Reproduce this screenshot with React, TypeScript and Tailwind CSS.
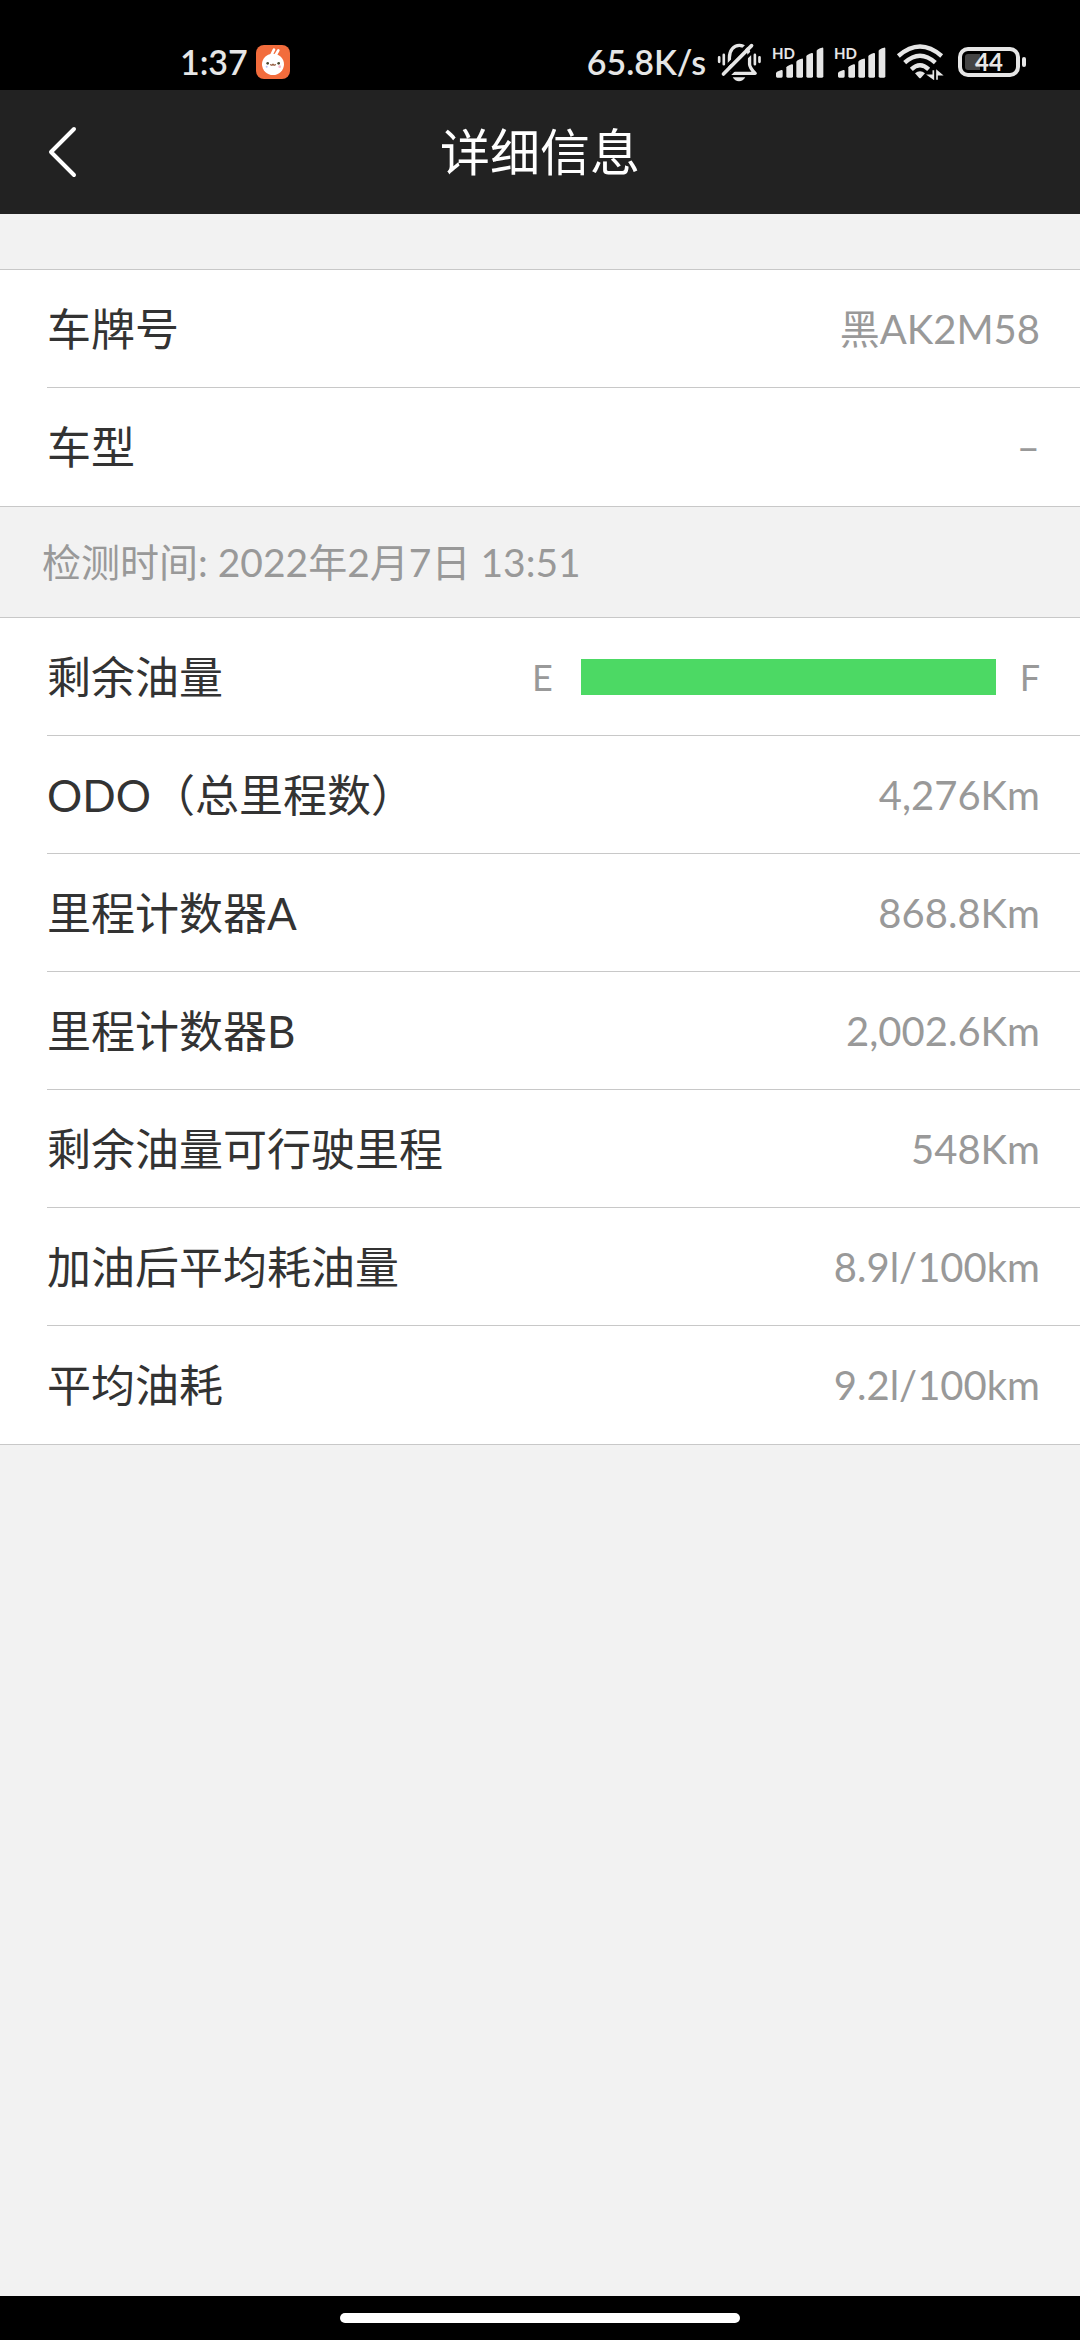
import type { ReactNode } from "react";

type Row = { label: string; value: ReactNode };

function SignalIcon() {
  return (
    <span className="relative block h-[34px] w-[52px]">
      <svg viewBox="608 45 156 102" className="h-full w-full" fill="#e6e6e6" aria-hidden="true">
        <path d="M620 129q1-4 10-7l6-2q4-1 4 3v16q0 4-4 4h-12q-4 0-4-4z" />
        <path d="M651 112q1-3 10-7l6-2q4-1 4 3v33q0 4-4 4h-12q-4 0-4-4z" />
        <path d="M681 95q1-3 10-7l6-2q4-1 4 3v50q0 4-4 4h-12q-4 0-4-4z" />
        <path d="M711 78q1-3 10-7l6-2q4-1 4 3v67q0 4-4 4h-12q-4 0-4-4z" />
        <path d="M742 62q1-3 10-7l6-2q4-1 4 3v83q0 4-4 4h-12q-4 0-4-4z" />
      </svg>
      <span className="absolute top-0 left-0 text-[15px] leading-[16px] font-bold">HD</span>
    </span>
  );
}

function MutedBellIcon() {
  return (
    <svg viewBox="440 37 138 121" className="h-[40px] w-[46px]" fill="none" stroke="#e6e6e6" aria-hidden="true">
      <path d="M480 112V84c0-22 13-37 30-37s31 15 31 37v20c0 8 4 14 17 28H482" strokeWidth="10" strokeLinejoin="round" />
      <path d="M456 126L538 42M474 142L560 56" stroke="#000" strokeWidth="9" />
      <path d="M462 134L547 48" strokeWidth="11" strokeLinecap="round" />
      <path d="M449 83v14M463 76v28M557 76v28M571 83v14" strokeWidth="8" strokeLinecap="round" />
      <path d="M490 144h38q-7 12-19 12t-19-12z" fill="#e6e6e6" stroke="none" />
    </svg>
  );
}

function WifiIcon() {
  return (
    <svg viewBox="228 44 144 108" className="mr-1 h-[36px] w-[48px]" fill="none" stroke="#e6e6e6" aria-hidden="true">
      <path d="M235 80q65-57 130 0M254 100q46-42 92 0M274 120q26-25 52 0" strokeWidth="13" />
      <path d="M285 132q15-12 30 0l-12 13q-3 3-6 0z" fill="#e6e6e6" stroke="none" />
      <path d="M340 123v25l-14-10h14M351 151v-26l13 11h-13" strokeWidth="5" fill="#e6e6e6" />
    </svg>
  );
}

function BatteryIcon() {
  return (
    <span className="relative flex h-[30px] w-[68px] items-center justify-center pr-[6px]">
      <svg viewBox="0 0 68 30" className="absolute inset-0 h-full w-full" aria-hidden="true">
        <rect x="2" y="2" width="58" height="26" rx="8" fill="none" stroke="#e6e6e6" strokeWidth="4" />
        <path d="M10 7h12v16H10q-3 0-3-3V10q0-3 3-3z" fill="#444" />
        <rect x="64" y="10" width="4" height="10" rx="2" fill="#e6e6e6" />
      </svg>
      <span className="relative text-[24px] leading-[30px] font-bold">44</span>
    </span>
  );
}

function RabbitAppIcon() {
  return (
    <svg viewBox="0 0 102 102" className="h-[34px] w-[34px]" aria-hidden="true">
      <rect width="102" height="102" rx="24" fill="#f26c3c" />
      <path d="M46 30l8-16M59 30l8-14" stroke="#fff" strokeWidth="8" strokeLinecap="round" />
      <ellipse cx="51" cy="58" rx="33" ry="32" fill="#fff" />
      <circle cx="35" cy="55" r="4" fill="#4a4a30" />
      <circle cx="68" cy="55" r="4" fill="#4a4a30" />
      <path d="M43 58q4 5 8 0q4 5 8 0" fill="none" stroke="#8a4a2a" strokeWidth="4" />
      <circle cx="32" cy="65" r="3" fill="#b9c4f5" />
      <circle cx="71" cy="65" r="4" fill="#f7b6cc" />
    </svg>
  );
}

function FuelGauge() {
  return (
    <div className="flex w-[508px] items-center text-[36px] leading-[44px]">
      <span>E</span>
      <div
        role="meter"
        aria-label="剩余油量"
        aria-valuemin={0}
        aria-valuemax={100}
        aria-valuenow={100}
        className="mr-6 ml-7 h-9 flex-1 bg-[#4cd964]"
      />
      <span>F</span>
    </div>
  );
}

function Section({ rows }: { rows: Row[] }) {
  return (
    <dl className="border-y border-[#c8c8c8] bg-white pl-[47px]">
      {rows.map((row) => (
        <div
          key={row.label}
          className="flex h-[118px] items-center justify-between border-b border-[#c8c8c8] pr-10 last:border-b-0"
        >
          <dt className="text-[44px] leading-[60px] text-[#333]">{row.label}</dt>
          <dd className="text-[40px] leading-[60px] text-[#999]">{row.value}</dd>
        </div>
      ))}
    </dl>
  );
}

const vehicle: Row[] = [
  { label: "车牌号", value: "黑AK2M58" },
  { label: "车型", value: "–" },
];

const readings: Row[] = [
  { label: "剩余油量", value: <FuelGauge /> },
  { label: "ODO（总里程数）", value: "4,276Km" },
  { label: "里程计数器A", value: "868.8Km" },
  { label: "里程计数器B", value: "2,002.6Km" },
  { label: "剩余油量可行驶里程", value: "548Km" },
  { label: "加油后平均耗油量", value: "8.9l/100km" },
  { label: "平均油耗", value: "9.2l/100km" },
];

export default function App() {
  return (
    <div className="flex min-h-screen flex-col bg-[#f2f2f2] font-[Lato,'Noto_Sans_CJK_SC',sans-serif]">
      <div className="flex h-[90px] items-center justify-between bg-black pt-[34px] pr-[54px] pl-[180px] text-[#e6e6e6]">
        <div className="flex items-center gap-2">
          <span className="text-[34px] leading-[40px] font-semibold">1:37</span>
          <RabbitAppIcon />
        </div>
        <div className="flex items-center gap-[10px]">
          <span className="text-[34px] leading-[40px] font-semibold">65.8K/s</span>
          <MutedBellIcon />
          <SignalIcon />
          <SignalIcon />
          <WifiIcon />
          <BatteryIcon />
        </div>
      </div>

      <header className="grid h-[124px] grid-cols-[1fr_auto_1fr] items-center bg-[#222] text-white">
        <button type="button" aria-label="返回" className="ml-9 flex h-[72px] w-[52px] items-center justify-center">
          <svg viewBox="0 0 32 52" className="h-[52px] w-[32px]" fill="none" stroke="currentColor" strokeWidth="4" strokeLinecap="round" strokeLinejoin="round" aria-hidden="true">
            <path d="M28 3L5 26L28 49" />
          </svg>
        </button>
        <h1 className="text-[50px] leading-[72px]">详细信息</h1>
      </header>

      <main className="flex-1 pt-[55px]">
        <Section rows={vehicle} />
        <p className="px-[42px] py-[25px] text-[39px] leading-[60px] text-[#999]">检测时间: 2022年2月7日 13:51</p>
        <Section rows={readings} />
      </main>

      <footer className="flex h-11 items-center justify-center bg-black">
        <div className="h-[10px] w-[400px] rounded-full bg-white" />
      </footer>
    </div>
  );
}
